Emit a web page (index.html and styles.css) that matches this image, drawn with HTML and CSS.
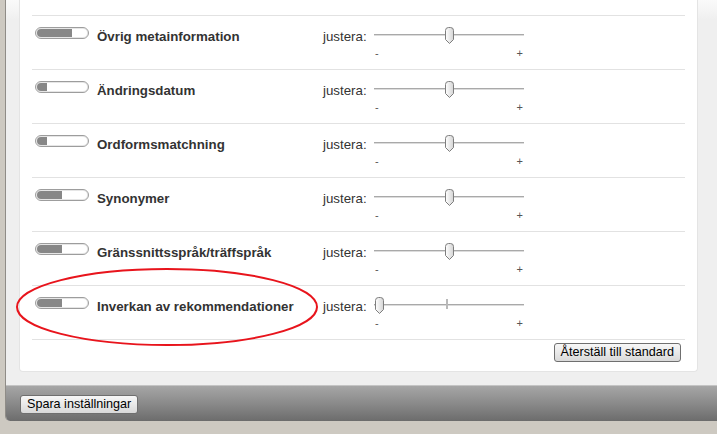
FILE: index.html
```html
<!DOCTYPE html>
<html>
<head>
<meta charset="utf-8">
<link rel="stylesheet" href="styles.css">
</head>
<body>
<div class="panel">
  <div class="content">
    <div class="card">
      <div class="row">
        <div class="toggle"><span class="fill" style="width:35px"></span></div>
        <div class="label">Övrig metainformation</div>
        <div class="justera">justera:</div>
        <div class="slider"><div class="track"></div><svg class="thumb" style="left:70px" viewBox="0 0 11 18" width="11" height="18"><defs><linearGradient id="g1" x1="0" x2="1" y1="0" y2="0"><stop offset="0" stop-color="#ffffff"/><stop offset="1" stop-color="#d4d4d4"/></linearGradient></defs><path d="M1.5 3.5 Q1.5 0.5 4.5 0.5 H6.5 Q9.5 0.5 9.5 3.5 V12.5 L5.5 16.5 L1.5 12.5 Z" fill="url(#g1)" stroke="#7d7d7d"/></svg><span class="minus">-</span><span class="plus">+</span></div>
      </div>
      <div class="row">
        <div class="toggle"><span class="fill" style="width:10px"></span></div>
        <div class="label">Ändringsdatum</div>
        <div class="justera">justera:</div>
        <div class="slider"><div class="track"></div><svg class="thumb" style="left:70px" viewBox="0 0 11 18" width="11" height="18"><path d="M1.5 3.5 Q1.5 0.5 4.5 0.5 H6.5 Q9.5 0.5 9.5 3.5 V12.5 L5.5 16.5 L1.5 12.5 Z" fill="url(#g1)" stroke="#7d7d7d"/></svg><span class="minus">-</span><span class="plus">+</span></div>
      </div>
      <div class="row">
        <div class="toggle"><span class="fill" style="width:10px"></span></div>
        <div class="label">Ordformsmatchning</div>
        <div class="justera">justera:</div>
        <div class="slider"><div class="track"></div><svg class="thumb" style="left:70px" viewBox="0 0 11 18" width="11" height="18"><path d="M1.5 3.5 Q1.5 0.5 4.5 0.5 H6.5 Q9.5 0.5 9.5 3.5 V12.5 L5.5 16.5 L1.5 12.5 Z" fill="url(#g1)" stroke="#7d7d7d"/></svg><span class="minus">-</span><span class="plus">+</span></div>
      </div>
      <div class="row">
        <div class="toggle"><span class="fill" style="width:25px"></span></div>
        <div class="label">Synonymer</div>
        <div class="justera">justera:</div>
        <div class="slider"><div class="track"></div><svg class="thumb" style="left:70px" viewBox="0 0 11 18" width="11" height="18"><path d="M1.5 3.5 Q1.5 0.5 4.5 0.5 H6.5 Q9.5 0.5 9.5 3.5 V12.5 L5.5 16.5 L1.5 12.5 Z" fill="url(#g1)" stroke="#7d7d7d"/></svg><span class="minus">-</span><span class="plus">+</span></div>
      </div>
      <div class="row">
        <div class="toggle"><span class="fill" style="width:25px"></span></div>
        <div class="label">Gränssnittsspråk/träffspråk</div>
        <div class="justera">justera:</div>
        <div class="slider"><div class="track"></div><svg class="thumb" style="left:70px" viewBox="0 0 11 18" width="11" height="18"><path d="M1.5 3.5 Q1.5 0.5 4.5 0.5 H6.5 Q9.5 0.5 9.5 3.5 V12.5 L5.5 16.5 L1.5 12.5 Z" fill="url(#g1)" stroke="#7d7d7d"/></svg><span class="minus">-</span><span class="plus">+</span></div>
      </div>
      <div class="row">
        <div class="toggle"><span class="fill" style="width:25px"></span></div>
        <div class="label">Inverkan av rekommendationer</div>
        <div class="justera">justera:</div>
        <div class="slider"><div class="track"></div><span class="tick"></span><svg class="thumb" style="left:0px" viewBox="0 0 11 18" width="11" height="18"><path d="M1.5 3.5 Q1.5 0.5 4.5 0.5 H6.5 Q9.5 0.5 9.5 3.5 V12.5 L5.5 16.5 L1.5 12.5 Z" fill="url(#g1)" stroke="#7d7d7d"/></svg><span class="minus">-</span><span class="plus">+</span></div>
      </div>
      <div class="card-foot">
        <button class="btn">Återställ till standard</button>
      </div>
    </div>
  </div>
  <div class="footer">
    <button class="btn">Spara inställningar</button>
  </div>
</div>
<svg class="annot" width="717" height="434" viewBox="0 0 717 434">
  <ellipse cx="167" cy="307" rx="150" ry="38" fill="none" stroke="#e8141c" stroke-width="2"/>
</svg>
</body>
</html>
```

FILE: styles.css
```css
html, body {
  margin: 0;
  padding: 0;
}
body {
  width: 717px;
  height: 434px;
  overflow: hidden;
  background: #cdc9c1;
  font-family: "Liberation Sans", Arial, sans-serif;
  position: relative;
}
.panel {
  margin-left: 5px;
  height: 421px;
  border-left: 1px solid #8f8c87;
  background: #f0f0f0;
  border-bottom-left-radius: 5px;
  display: flex;
  flex-direction: column;
  overflow: hidden;
}
.content {
  padding: 0 19px 0 13px;
  height: 385px;
  box-sizing: border-box;
  background: linear-gradient(#fafafa, #efefef 20px);
}
.card {
  background: #fff;
  border: 1px solid #e4e4e4;
  border-top: none;
  border-radius: 0 0 4px 4px;
  height: 372px;
  box-sizing: border-box;
  padding: 15px 12px 0 12px;
}
.row {
  height: 54px;
  box-sizing: border-box;
  border-top: 1px solid #e2e2e2;
  display: flex;
  align-items: flex-start;
  padding-top: 11px;
}
.toggle {
  margin-left: 3px;
  width: 54px;
  height: 12px;
  box-sizing: border-box;
  border: 1px solid #9d9d9d;
  box-shadow: inset 0 0 0 1px #e6e6e6;
  border-radius: 6px;
  background: #fff;
  position: relative;
  flex: none;
}
.fill {
  position: absolute;
  left: 1px;
  top: 1px;
  height: 8px;
  background: #878787;
  border-radius: 4px 0 0 4px;
}
.label {
  margin-left: 8px;
  margin-top: 2px;
  width: 226px;
  flex: none;
  font-weight: bold;
  font-size: 13.3px;
  line-height: 15px;
  color: #333;
}
.justera {
  width: 51px;
  margin-top: 2px;
  flex: none;
  font-size: 13.3px;
  line-height: 15px;
  color: #333;
}
.slider {
  position: relative;
  width: 150px;
  height: 32px;
  flex: none;
}
.track {
  position: absolute;
  left: 0;
  right: 0;
  top: 7px;
  height: 1px;
  background: #a9a9a9;
  border-bottom: 1px solid #dcdcdc;
}
.tick {
  position: absolute;
  left: 72px;
  top: 2px;
  width: 2px;
  height: 10px;
  background: #b9b9b9;
}
.thumb {
  position: absolute;
  top: 0;
  display: block;
}
.minus, .plus {
  position: absolute;
  top: 20px;
  font-size: 11px;
  line-height: 12px;
  color: #555;
}
.minus { left: 1px; }
.plus { right: 1px; }
.card-foot {
  border-top: 1px solid #e2e2e2;
  display: flex;
  justify-content: flex-end;
  padding-top: 3px;
  padding-right: 4px;
}
.btn {
  font-family: "Liberation Sans", Arial, sans-serif;
  font-size: 12.6px;
  color: #000;
  height: 19px;
  padding: 0 6px;
  border: 1px solid #6f6f6f;
  border-radius: 3px;
  background: linear-gradient(#f7f7f7, #e9e9e9 50%, #d9d9d9);
  line-height: 15px;
  margin: 0;
}
.footer {
  flex: 1;
  background: linear-gradient(#a6a6a6, #8a8a8a 50%, #6c6c6c);
  border-top: 1px solid #c4c4c4;
  padding: 8px 0 0 14px;
  box-sizing: border-box;
}
.annot {
  position: absolute;
  left: 0;
  top: 0;
  pointer-events: none;
}
```
